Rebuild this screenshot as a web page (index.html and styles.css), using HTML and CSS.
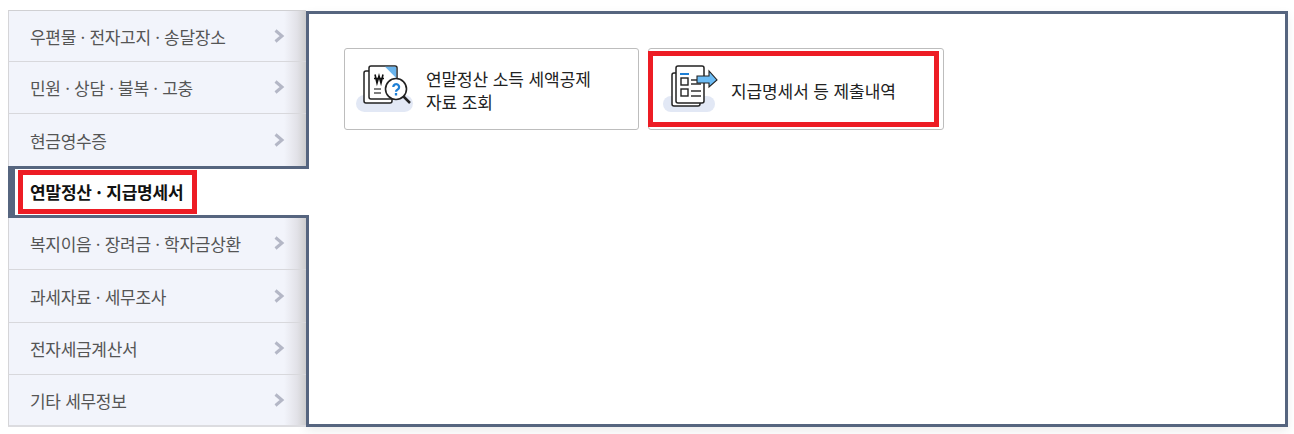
FILE: index.html
```html
<!DOCTYPE html>
<html lang="ko">
<head>
<meta charset="utf-8">
<title>연말정산 · 지급명세서</title>
<link rel="stylesheet" href="styles.css">
</head>
<body>
<div class="layout">
  <ul class="menu">
    <li class="item item-first"><span>우편물 · 전자고지 · 송달장소</span><svg class="chev" viewBox="0 0 11 14"><path d="M1.5 1.5 8 7l-6.500 5.500" fill="none" stroke="#b4b7c6" stroke-width="3"/></svg></li>
    <li class="item"><span>민원 · 상담 · 불복 · 고충</span><svg class="chev" viewBox="0 0 11 14"><path d="M1.5 1.5 8 7l-6.500 5.500" fill="none" stroke="#b4b7c6" stroke-width="3"/></svg></li>
    <li class="item item-tall"><span>현금영수증</span><svg class="chev" viewBox="0 0 11 14"><path d="M1.5 1.5 8 7l-6.500 5.500" fill="none" stroke="#b4b7c6" stroke-width="3"/></svg></li>
    <li class="active"><span class="active-label">연말정산 · 지급명세서</span></li>
    <li class="item item-after"><span>복지이음 · 장려금 · 학자금상환</span><svg class="chev" viewBox="0 0 11 14"><path d="M1.5 1.5 8 7l-6.500 5.500" fill="none" stroke="#b4b7c6" stroke-width="3"/></svg></li>
    <li class="item item-tall"><span>과세자료 · 세무조사</span><svg class="chev" viewBox="0 0 11 14"><path d="M1.5 1.5 8 7l-6.500 5.500" fill="none" stroke="#b4b7c6" stroke-width="3"/></svg></li>
    <li class="item"><span>전자세금계산서</span><svg class="chev" viewBox="0 0 11 14"><path d="M1.5 1.5 8 7l-6.500 5.500" fill="none" stroke="#b4b7c6" stroke-width="3"/></svg></li>
    <li class="item item-end"><span>기타 세무정보</span><svg class="chev" viewBox="0 0 11 14"><path d="M1.5 1.5 8 7l-6.500 5.500" fill="none" stroke="#b4b7c6" stroke-width="3"/></svg></li>
  </ul>
  <main class="panel">
    <a class="card">
      <svg class="icon" viewBox="0 0 60 60">
        <rect x="0" y="36" width="57" height="17" rx="8.500" fill="#e2e8f5"/>
        <rect x="8" y="12" width="28" height="32" rx="2" fill="#fff" stroke="#222" stroke-width="1.500"/>
        <rect x="13" y="7" width="28" height="33" rx="2" fill="#fff" stroke="#222" stroke-width="1.500"/>
        <path d="M29 7.800h10.200a1 1 0 0 1 1 1V19z" fill="#6ab4ec"/>
        <path d="M19 15.500l2 8.500 2-7 2 7 2-8.500M18 19.500h10" fill="none" stroke="#111" stroke-width="1.600"/>
        <path d="M18 30h7M18 34h7" stroke="#555" stroke-width="1.300"/>
        <path d="M47 37l7 7" stroke="#222" stroke-width="2.500"/>
        <circle cx="40" cy="30" r="10.500" fill="#fff" stroke="#222" stroke-width="1.600"/>
        <path d="M37.300 28a2.900 2.900 0 1 1 4.500 2.400c-1.200.8-1.800 1.200-1.800 2.300M40 34v2.400" fill="none" stroke="#1d7fd6" stroke-width="2.300"/>
      </svg>
      <span class="card-text">연말정산 소득 세액공제<br>자료 조회</span>
    </a>
    <a class="card card-marked">
      <svg class="icon" viewBox="0 0 60 60">
        <rect x="0" y="37" width="52" height="16" rx="8" fill="#e2e8f5"/>
        <rect x="9" y="14" width="28" height="33" rx="2" fill="#fff" stroke="#222" stroke-width="1.500"/>
        <rect x="13" y="7" width="28" height="37" rx="2" fill="#fff" stroke="#222" stroke-width="1.500"/>
        <path d="M17 15h9" stroke="#1d7fd6" stroke-width="2"/>
        <rect x="18" y="19" width="7" height="7" fill="#fff" stroke="#222" stroke-width="1.400"/>
        <rect x="18" y="30" width="7" height="7" fill="#fff" stroke="#222" stroke-width="1.400"/>
        <path d="M28 21h6M28 25h10M28 32h10M28 37h10" stroke="#333" stroke-width="1.300"/>
        <path d="M34 17h12v-5l8 9-8 7v-4H34z" fill="#6cbcf5" stroke="#222" stroke-width="1.100"/>
      </svg>
      <span class="card-text">지급명세서 등 제출내역</span>
    </a>
  </main>
</div>
</body>
</html>
```
FILE: styles.css
```css
* { box-sizing: border-box; }
html, body { margin: 0; padding: 0; }
body {
  width: 1294px;
  height: 434px;
  overflow: hidden;
  background: #fff;
  font-family: "Noto Sans CJK KR", "Liberation Sans", sans-serif;
}
.layout {
  display: flex;
  align-items: flex-start;
  padding: 10px 6px 0 8px;
}
.menu {
  flex: 0 0 298px;
  margin: 0;
  padding: 0;
  list-style: none;
  position: relative;
  z-index: 2;
}
.item {
  height: 52px;
  padding: 0 21px;
  display: flex;
  align-items: center;
  justify-content: space-between;
  color: #555;
  font-size: 17px;
  letter-spacing: -0.3px;
  background: linear-gradient(90deg, #f2f4fb 0, #f2f4fb 275px, #e2e2e8 288px, #cbcbcb 298px);
  border-left: 1px solid #d5d5d8;
  border-top: 1px solid #d8d8dc;
}
.item-first { height: 51px; border-top: 1px solid #d0d0d3; }
.item-tall { height: 53px; }
.item-after { height: 51px; border-top: 0; }
.item-end { height: 53px; border-bottom: 2px solid #dcdce0; }
.chev { width: 11px; height: 14px; margin-top: -1px; flex: none; }
.active {
  height: 52px;
  width: 301px;
  margin-right: -3px;
  background: #fff;
  border: 3px solid #56657f;
  border-left-width: 7px;
  border-right: 0;
  display: flex;
  align-items: center;
  padding-left: 3px;
  color: #111;
  font-size: 17px;
  font-weight: 700;
  letter-spacing: -0.2px;
}
.active-label {
  display: block;
  padding: 0 9px 0 7px;
  height: 44px;
  line-height: 34px;
  border: 5px solid #ed1c24;
}
.panel {
  flex: 1;
  height: 416px;
  margin-top: 1px;
  border: 3px solid #56657f;
  padding: 34px 35px;
  display: flex;
  align-items: flex-start;
  gap: 9px;
  background: #fff;
  box-shadow: 0 4px 10px rgba(0, 0, 0, 0.08);
}
.card {
  position: relative;
  flex: 0 0 295px;
  height: 82px;
  display: flex;
  align-items: center;
  padding-left: 11px;
  gap: 10px;
  border: 1px solid #bdbdbd;
  border-radius: 3px;
  background: #fff;
  color: #222;
  font-size: 17px;
  line-height: 23px;
  letter-spacing: -0.1px;
}
.card-marked { flex-basis: 296px; padding-left: 14px; gap: 8px; }
.card-marked::after {
  content: "";
  box-sizing: border-box;
  position: absolute;
  left: -1px;
  top: 2px;
  width: 291px;
  height: 76px;
  border: 5px solid #ed1c24;
}
.icon { width: 60px; height: 60px; flex: none; }
.card-text { position: relative; top: 1px; }
```
